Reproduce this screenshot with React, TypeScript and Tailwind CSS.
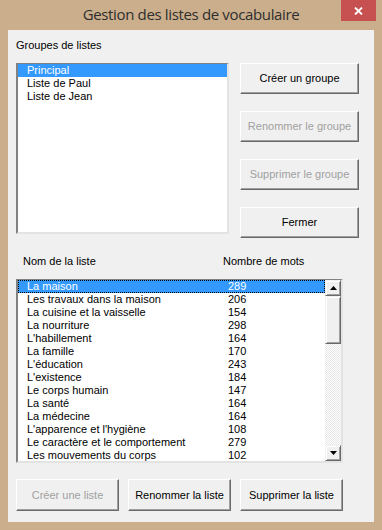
import type { ReactNode } from "react";

const font = { fontFamily: '"Liberation Sans", Arial, sans-serif' };

const groups = ["Principal", "Liste de Paul", "Liste de Jean"];

const lists: [string, number][] = [
  ["La maison", 289],
  ["Les travaux dans la maison", 206],
  ["La cuisine et la vaisselle", 154],
  ["La nourriture", 298],
  ["L'habillement", 164],
  ["La famille", 170],
  ["L'éducation", 243],
  ["L'existence", 184],
  ["Le corps humain", 147],
  ["La santé", 164],
  ["La médecine", 164],
  ["L'apparence et l'hygiène", 108],
  ["Le caractère et le comportement", 279],
  ["Les mouvements du corps", 102],
];

function Button({ children, disabled, className }: { children: ReactNode; disabled?: boolean; className?: string }) {
  return (
    <div
      className={`flex items-center justify-center border-t border-l border-b border-r border-t-white border-l-white border-b-[#696969] border-r-[#696969] bg-[#f0f0f0] text-[11px] shadow-[inset_-1px_-1px_0_#a0a0a0] ${
        disabled ? "text-[#a0a0a0]" : "text-black"
      } ${className ?? ""}`}
    >
      {children}
    </div>
  );
}

function ScrollButton({ up }: { up?: boolean }) {
  return (
    <div className="flex h-[16px] items-center justify-center border border-t-[#f0f0f0] border-l-[#f0f0f0] border-b-[#696969] border-r-[#696969] bg-[#f0f0f0] shadow-[inset_1px_1px_0_#fff,inset_-1px_-1px_0_#a0a0a0]">
      <svg width="7" height="4" viewBox="0 0 7 4">
        {up ? <polygon points="3.5,0 7,4 0,4" fill="#000" /> : <polygon points="0,0 7,0 3.5,4" fill="#000" />}
      </svg>
    </div>
  );
}

export default function App() {
  return (
    <div className="flex h-[530px] w-[382px] flex-col bg-[#cbae8c]" style={font}>
      <div className="relative flex h-[30px] items-center justify-center">
        <span
          className="pb-[2px] text-[15px] tracking-[-0.35px] text-[#2e2e2e]"
          style={{ fontFamily: '"Open Sans", "Noto Sans", sans-serif' }}
        >
          Gestion des listes de vocabulaire
        </span>
        <div className="absolute right-[6px] top-0 flex h-[21px] w-[35px] items-center justify-center bg-[#c75050]">
          <svg width="9" height="8" viewBox="0 0 9 8">
            <path d="M1 0.5 L8 7.5 M8 0.5 L1 7.5" stroke="#fff" strokeWidth="1.8" />
          </svg>
        </div>
      </div>

      <div className="mx-[8px] flex h-[492px] flex-col bg-[#f0f0f0] px-[8px]">
        <div className="mt-[9px] h-[13px] text-[11px] leading-[13px] text-black">Groupes de listes</div>

        <div className="mt-[11px] flex gap-[11px]">
          <div className="h-[171px] w-[213px] border-t border-l-2 border-r-2 border-b-2 border-t-[#828282] border-l-[#828282] border-b-[#e3e3e3] border-r-[#e3e3e3] bg-white">
            {groups.map((g, i) => (
              <div
                key={g}
                className={`h-[13px] pl-[9px] text-[11px] leading-[13px] ${i === 0 ? "bg-[#3399ff] text-white" : "text-black"}`}
              >
                {g}
              </div>
            ))}
          </div>
          <div className="flex w-[119px] flex-col gap-[17px]">
            <Button className="h-[31px]">Créer un groupe</Button>
            <Button className="h-[31px]" disabled>
              Renommer le groupe
            </Button>
            <Button className="h-[31px]" disabled>
              Supprimer le groupe
            </Button>
            <Button className="h-[31px]">Fermer</Button>
          </div>
        </div>

        <div className="mt-[17px] flex h-[13px] text-[11px] leading-[13px] text-black">
          <span className="w-[207px] pl-[7px]">Nom de la liste</span>
          <span>Nombre de mots</span>
        </div>

        <div className="mt-[11px] flex h-[184px] w-[327px] border-t border-l-2 border-r-2 border-b-2 border-t-[#828282] border-l-[#828282] border-b-[#e3e3e3] border-r-[#e3e3e3] bg-white">
          <div className="flex-1">
            {lists.map(([name, n], i) => (
              <div
                key={name}
                className={`flex h-[13px] pl-[9px] text-[11px] leading-[13px] ${
                  i === 0
                    ? "bg-[#3399ff] text-white outline-1 -outline-offset-1 outline-dotted outline-black"
                    : "text-black"
                }`}
              >
                <span className="w-[201px]">{name}</span>
                <span>{n}</span>
              </div>
            ))}
          </div>
          <div className="flex w-[16px] flex-col">
            <ScrollButton up />
            <div className="h-[48px] border border-t-[#f0f0f0] border-l-[#f0f0f0] border-b-[#696969] border-r-[#696969] bg-[#f0f0f0] shadow-[inset_1px_1px_0_#fff,inset_-1px_-1px_0_#a0a0a0]" />
            <div className="flex-1 bg-[repeating-conic-gradient(#e6e6e6_0_25%,#ffffff_0_50%)] bg-[length:2px_2px]" />
            <ScrollButton />
          </div>
        </div>

        <div className="mt-[16px] flex w-[327px] gap-[9px]">
          <Button className="h-[32px] w-[103px]" disabled>
            Créer une liste
          </Button>
          <Button className="h-[32px] w-[103px]">Renommer la liste</Button>
          <Button className="h-[32px] w-[103px]">Supprimer la liste</Button>
        </div>
      </div>
    </div>
  );
}
